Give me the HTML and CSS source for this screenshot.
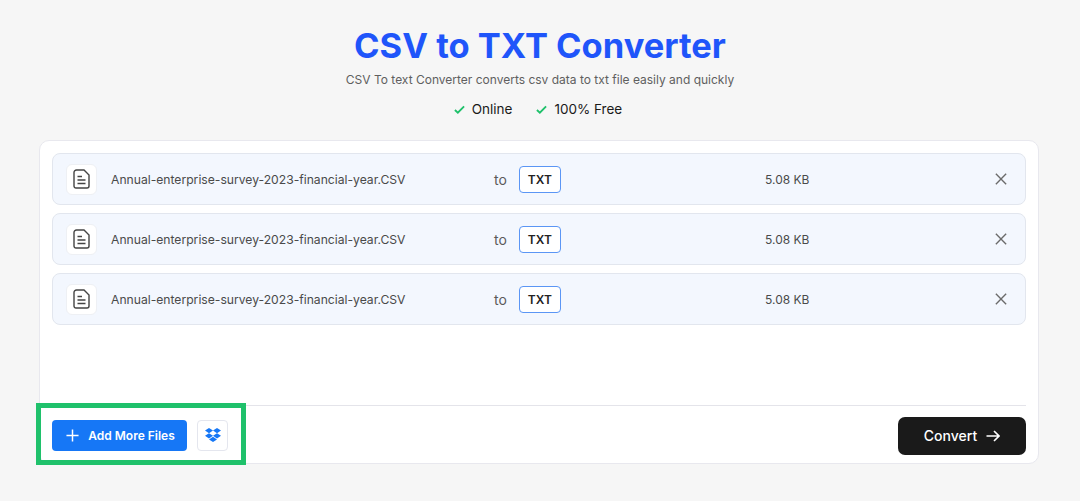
FILE: index.html
```html
<!DOCTYPE html>
<html lang="en">
<head>
  <meta charset="UTF-8">
  <title>CSV to TXT Converter</title>
  <link rel="stylesheet" href="styles.css">
</head>
<body>

  <!-- Header -->
  <div class="header">
    <h1>CSV to TXT Converter</h1>
    <p class="subtitle">CSV To text Converter converts csv data to txt file easily and quickly</p>
    <div class="features">
      <span class="feature">
        <svg class="check" viewBox="0 0 12 12"><path d="M1 6.5 4.2 9.5 11 2.5"/></svg>
        Online
      </span>
      <span class="feature">
        <svg class="check" viewBox="0 0 12 12"><path d="M1 6.5 4.2 9.5 11 2.5"/></svg>
        100% Free
      </span>
    </div>
  </div>

  <!-- Converter card -->
  <div class="card">
    <div class="file-list">
      <div class="file-row">
        <div class="file-name">
          <span class="file-icon">
            <svg viewBox="0 0 17 20"><path d="M3.5 1H11L16 6V17A2 2 0 0 1 14 19H3A2 2 0 0 1 1 17V3.5A2.5 2.5 0 0 1 3.5 1Z"/><path d="M4.5 7.5H9M4.5 11H12.5M4.5 14.5H12.5"/></svg>
          </span>
          Annual-enterprise-survey-2023-financial-year.CSV
        </div>
        <div class="file-format">to <span class="format-tag">TXT</span></div>
        <div class="file-size">5.08 KB</div>
        <svg class="remove" viewBox="0 0 14 14"><path d="M1 1 13 13M13 1 1 13"/></svg>
      </div>
      <div class="file-row">
        <div class="file-name">
          <span class="file-icon">
            <svg viewBox="0 0 17 20"><path d="M3.5 1H11L16 6V17A2 2 0 0 1 14 19H3A2 2 0 0 1 1 17V3.5A2.5 2.5 0 0 1 3.5 1Z"/><path d="M4.5 7.5H9M4.5 11H12.5M4.5 14.5H12.5"/></svg>
          </span>
          Annual-enterprise-survey-2023-financial-year.CSV
        </div>
        <div class="file-format">to <span class="format-tag">TXT</span></div>
        <div class="file-size">5.08 KB</div>
        <svg class="remove" viewBox="0 0 14 14"><path d="M1 1 13 13M13 1 1 13"/></svg>
      </div>
      <div class="file-row">
        <div class="file-name">
          <span class="file-icon">
            <svg viewBox="0 0 17 20"><path d="M3.5 1H11L16 6V17A2 2 0 0 1 14 19H3A2 2 0 0 1 1 17V3.5A2.5 2.5 0 0 1 3.5 1Z"/><path d="M4.5 7.5H9M4.5 11H12.5M4.5 14.5H12.5"/></svg>
          </span>
          Annual-enterprise-survey-2023-financial-year.CSV
        </div>
        <div class="file-format">to <span class="format-tag">TXT</span></div>
        <div class="file-size">5.08 KB</div>
        <svg class="remove" viewBox="0 0 14 14"><path d="M1 1 13 13M13 1 1 13"/></svg>
      </div>
    </div>

    <div class="card-footer">
      <div class="add-group">
        <button class="btn-add">
          <svg viewBox="0 0 14 14"><path d="M7 0.5V13.5M0.5 7H13.5"/></svg>
          Add More Files
        </button>
        <button class="btn-dropbox">
          <svg viewBox="0 0 16 15"><path d="M4 0 8 2.6 4 5.2 0 2.6ZM12 0 16 2.6 12 5.2 8 2.6ZM4 10.4 0 7.8 4 5.2 8 7.8ZM12 10.4 8 7.8 12 5.2 16 7.8ZM4 11.4 8 8.8 12 11.4 8 14Z"/></svg>
        </button>
      </div>
      <button class="btn-convert">
        Convert
        <svg viewBox="0 0 14 12"><path d="M0.5 6H13M8 1 13 6 8 11"/></svg>
      </button>
    </div>

    <div class="highlight"></div>
  </div>

</body>
</html>
```

FILE: styles.css
```css
body {
  font-family: Inter, 'Noto Sans', sans-serif;
  background: #f6f6f6;
  margin: 0;
  height: 501px;
  overflow: hidden;
}

button {
  font-family: inherit;
  border: none;
  cursor: pointer;
}

.header {
  text-align: center;
  padding-top: 24px;
}

h1 {
  margin: 0;
  color: #1f55fa;
  font-size: 34.5px;
  line-height: 44px;
  font-weight: 700;
}

.subtitle {
  margin: 4px 0 0;
  color: #5f5f5f;
  font-size: 12px;
  line-height: 16px;
}

.features {
  display: flex;
  justify-content: center;
  gap: 24px;
  margin-top: 11px;
  padding-right: 4px;
  height: 20px;
}

.feature {
  display: flex;
  align-items: center;
  gap: 7px;
  font-size: 13.5px;
  color: #1a1a1a;
}

.check {
  width: 11px;
  height: 11px;
  fill: none;
  stroke: #1fc16b;
  stroke-width: 2;
}

.card {
  position: relative;
  display: flex;
  flex-direction: column;
  justify-content: space-between;
  box-sizing: border-box;
  width: 1000px;
  height: 324px;
  margin: 21px 0 0 39px;
  padding: 12px 12px 0;
  background: #ffffff;
  border: 1px solid #e8e8ee;
  border-radius: 10px;
}

.file-list {
  display: flex;
  flex-direction: column;
  gap: 8px;
}

.file-row {
  display: flex;
  align-items: center;
  box-sizing: border-box;
  height: 52px;
  padding: 0 18px 0 13px;
  background: #f3f7fe;
  border: 1px solid #e2e6ee;
  border-radius: 8px;
}

.file-name {
  display: flex;
  align-items: center;
  gap: 14px;
  width: 428px;
  font-size: 12.15px;
  color: #4a4a4a;
}

.file-icon {
  display: flex;
  align-items: center;
  justify-content: center;
  width: 31px;
  height: 31px;
  box-sizing: border-box;
  background: #ffffff;
  border: 1px solid #eef0f4;
  border-radius: 6px;
}

.file-icon svg {
  width: 17px;
  height: 20px;
  fill: none;
  stroke: #444444;
  stroke-width: 1.4;
}

.file-format {
  display: flex;
  align-items: center;
  gap: 12px;
  width: 271px;
  font-size: 14px;
  color: #5a5a5a;
}

.format-tag {
  display: flex;
  align-items: center;
  justify-content: center;
  box-sizing: border-box;
  width: 42px;
  height: 27px;
  background: #ffffff;
  border: 1px solid #5b96f5;
  border-radius: 4px;
  font-size: 12px;
  font-weight: 600;
  color: #222222;
}

.file-size {
  flex: 1;
  font-size: 12px;
  color: #4a4a4a;
}

.remove {
  width: 12px;
  height: 12px;
  fill: none;
  stroke: #6b6b6b;
  stroke-width: 1.6;
}

.card-footer {
  display: flex;
  align-items: center;
  justify-content: space-between;
  height: 55px;
  padding-top: 2px;
  border-top: 1px solid #e4e4ea;
}

.add-group {
  display: flex;
  align-items: center;
  gap: 10px;
}

.btn-add {
  display: flex;
  align-items: center;
  justify-content: center;
  gap: 9px;
  box-sizing: border-box;
  width: 135px;
  height: 31px;
  padding: 0 0 0 2px;
  background: #1677f6;
  border-radius: 4px;
  color: #ffffff;
  font-size: 12px;
  font-weight: 600;
}

.btn-add svg {
  width: 13px;
  height: 13px;
  fill: none;
  stroke: #ffffff;
  stroke-width: 1.6;
}

.btn-dropbox {
  display: flex;
  align-items: center;
  justify-content: center;
  box-sizing: border-box;
  width: 31px;
  height: 31px;
  padding: 0;
  background: #ffffff;
  border: 1px solid #e4e6ee;
  border-radius: 4px;
}

.btn-dropbox svg {
  width: 16px;
  height: 15px;
  fill: #1677f6;
}

.btn-convert {
  display: flex;
  align-items: center;
  justify-content: center;
  gap: 9px;
  width: 128px;
  height: 38px;
  background: #1a1a1a;
  border-radius: 7px;
  color: #ffffff;
  font-size: 14px;
  font-weight: 500;
}

.btn-convert svg {
  width: 14px;
  height: 12px;
  fill: none;
  stroke: #ffffff;
  stroke-width: 1.6;
}

/* green callout around the add buttons */
.highlight {
  position: absolute;
  left: -4px;
  top: 262px;
  box-sizing: border-box;
  width: 210px;
  height: 62px;
  border: 5px solid #1fc16b;
}
```
